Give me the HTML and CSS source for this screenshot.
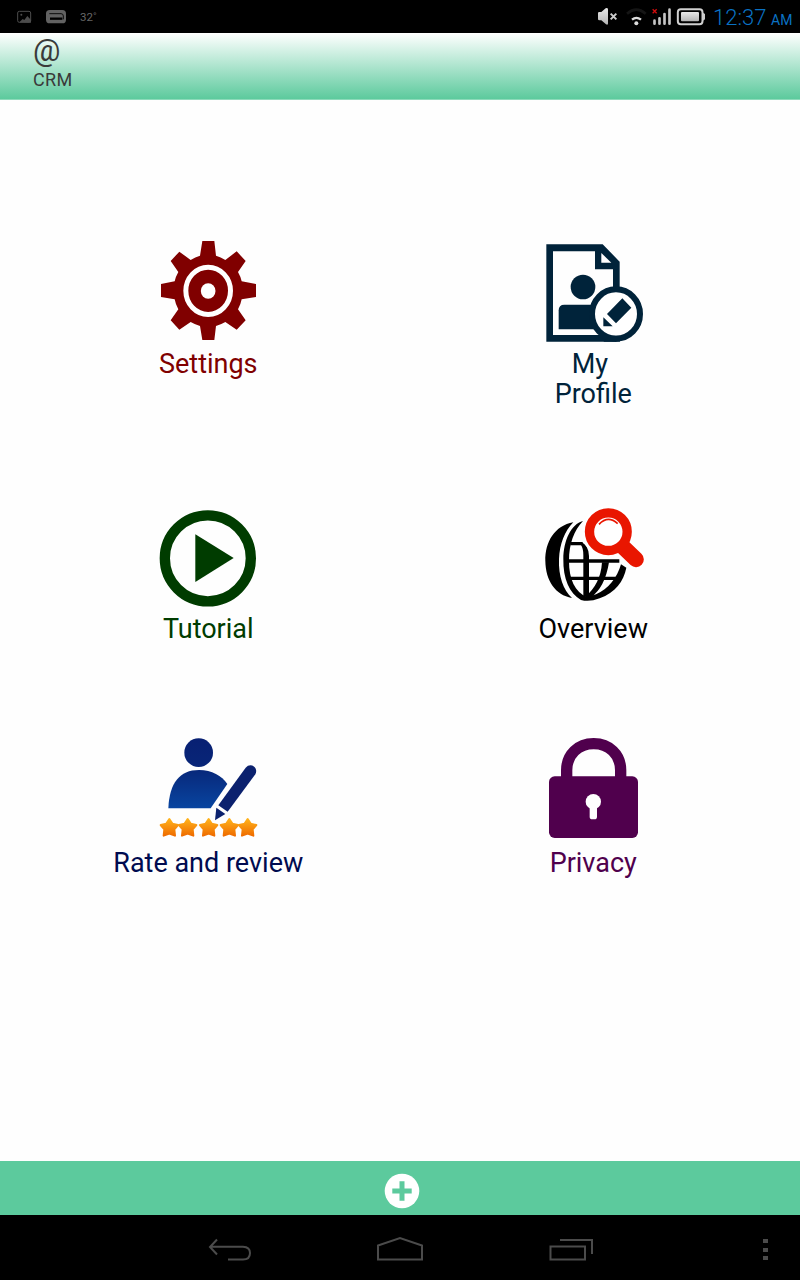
FILE: index.html
```html
<!DOCTYPE html>
<html lang="en">
<head>
<meta charset="utf-8">
<title>CRM</title>
<link rel="stylesheet" href="styles.css">
</head>
<body>
<div class="statusbar">
  <svg class="status-left" viewBox="0 0 76 33">
    <g transform="scale(.33333)">
      <rect x="53" y="34" width="39" height="33" rx="5" fill="none" stroke="#4c4c4c" stroke-width="3"/>
      <path d="M58 67L68 57L73 60L82 48L93 60V68Z" fill="#4c4c4c"/><circle cx="64" cy="44" r="3" fill="#4c4c4c"/>
      <rect x="138" y="30" width="60" height="40" rx="11" fill="#626262"/>
      <path d="M148 41H183Q190 41 190 48V58" fill="none" stroke="#0c0c0c" stroke-width="3"/>
      <path d="M150 56H187" stroke="#000" stroke-width="7"/>
    </g>
  </svg>
  <span class="temp">32˚</span>
  <svg class="status-right" viewBox="590 0 120 33">
    <defs><linearGradient id="silver" x2="0" y2="1"><stop stop-color="#e8e8e8"/><stop offset="1" stop-color="#b4b4b4"/></linearGradient></defs>
    <g transform="translate(580 0) scale(.33333)">
      <path d="M54 39Q54 36 58 36H64L77 25Q83 22 84 28V71Q83 76 78 73L64 61H58Q54 61 54 57Z" fill="url(#silver)"/>
      <path d="M92 41L109 58M109 41L92 58" stroke="#ccc" stroke-width="6"/>
      <path d="M141 41Q169 17 197 41" fill="none" stroke="#151515" stroke-width="8"/>
      <path d="M156 59Q169 48 183 59" fill="none" stroke="#ddd" stroke-width="7"/>
      <circle cx="169" cy="70" r="6" fill="#ddd"/>
      <path d="M218 28L230 40M230 28L218 40" stroke="#d00c0c" stroke-width="4"/>
      <path d="M223.500 62V71M238.500 55V71M253.500 42V71M268.500 29V71" stroke="#c4c4c4" stroke-width="8" stroke-linecap="round"/>
      <rect x="293.500" y="27.500" width="74" height="45" rx="9" fill="none" stroke="#d0d0d0" stroke-width="6"/>
      <rect x="303" y="36" width="54" height="28" rx="3" fill="url(#silver)"/>
      <path d="M369 38L375 42V58L369 62Z" fill="#ccc"/>
    </g>
  </svg>
  <span class="time">12:37</span><span class="ampm">AM</span>
</div>

<header class="appbar">
  <span class="logo">@</span>
  <span class="name">CRM</span>
</header>

<main class="menu">
  <a class="tile settings">
    <svg class="icon" viewBox="152 239 112 110"><g transform="translate(140 230) scale(.33333)">
      <path fill="currentColor" d="M187 33H223L228 77Q242 81 256 90L290 64L317 93L294 126Q302 140 305 154L348 162V201L305 208Q302 224 294 238L317 271L290 299L256 276Q242 284 228 288L223 330H187L180 288Q166 284 152 276L118 299L92 271L115 238Q107 224 104 208L63 201V162L104 154Q107 140 115 126L92 93L118 65L152 90Q166 81 180 77Z"/>
      <ellipse cx="204.500" cy="182.500" rx="67" ry="71" fill="none" stroke="#fff" stroke-width="15"/>
      <ellipse cx="204.500" cy="183" rx="22" ry="23" fill="#fff"/>
    </g></svg>
    <span class="label">Settings</span>
  </a>
  <a class="tile profile">
    <svg class="icon" viewBox="537 239 112 110"><g transform="translate(520 230) scale(.33333)">
      <path d="M79 43H248L299 95V180H279V118H225V64H99V315H289V335H79Z" fill="currentColor"/>
      <path d="M244 69V98H274Z" fill="#fff"/>
      <circle cx="189" cy="171" r="37" fill="currentColor"/>
      <path d="M116 298V241Q116 224 133 224H240V298Z" fill="currentColor"/>
      <ellipse cx="288" cy="252" rx="72" ry="74" fill="#fff" stroke="currentColor" stroke-width="18"/>
      <path d="M270 317H300V335H250Z" fill="currentColor"/>
      <path d="M307 205L334 233L288 280L261 252Z M250 262L278 289H250Z" fill="currentColor"/>
    </g></svg>
    <span class="label">My&nbsp;<br>Profile</span>
  </a>
  <a class="tile tutorial">
    <svg class="icon" viewBox="152 504 112 110"><g transform="translate(140 500) scale(.33333)">
      <circle cx="203.500" cy="175" r="129" fill="none" stroke="currentColor" stroke-width="31"/>
      <path d="M166 103L281 174L166 246Z" fill="currentColor"/>
    </g></svg>
    <span class="label">Tutorial</span>
  </a>
  <a class="tile overview">
    <svg class="icon" viewBox="537 504 112 110"><g transform="translate(520 500) scale(.33333)">
      <path d="M160 67C104 77 75 126 76 183C77 242 106 285 156 294C130 270 115 228 117 177C119 132 134 93 160 67Z" fill="currentColor"/>
      <path d="M189 63C153 73 131 120 130 177C129 235 148 280 183 300Q208 307 239 295C286 277 311 245 319 203L303 193C292 232 265 268 228 283L202 291C164 277 147 237 147 182C147 132 162 91 189 63Z" fill="currentColor"/>
      <path d="M151 131H188M140 183H298M148 235H297" fill="none" stroke="currentColor" stroke-width="10"/>
      <path d="M185 127Q206 137 207 168V290H190V165Q190 145 183 135Z" fill="currentColor"/>
      <path d="M246 187H267Q255 262 213 292L195 291Q242 252 246 187Z" fill="currentColor"/>
      <path d="M315 141L348 177" stroke="#fff" stroke-width="60" stroke-linecap="round"/>
      <circle cx="265" cy="95" r="79" fill="#fff"/>
      <path d="M305 137L348 178" stroke="#e91600" stroke-width="47" stroke-linecap="round"/>
      <circle cx="265" cy="95" r="56.500" fill="#fff" stroke="#e91600" stroke-width="28"/>
      <path d="M237 73Q264 45 293 71" fill="none" stroke="#e91600" stroke-width="5"/>
    </g></svg>
    <span class="label">Overview</span>
  </a>
  <a class="tile rate">
    <svg class="icon" viewBox="152 738 112 110">
      <defs>
        <linearGradient id="blue" gradientUnits="userSpaceOnUse" x1="0" y1="30" x2="0" y2="235"><stop stop-color="#082073"/><stop offset=".4" stop-color="#082678"/><stop offset="1" stop-color="#0845a0"/></linearGradient>
        <linearGradient id="gold" x2="0" y2="1"><stop stop-color="#ffb21b"/><stop offset="1" stop-color="#ef6d00"/></linearGradient>
        <path id="star" d="M0-25L9-11L26-7L15 6L17 25L0 19L-17 25L-15 6L-26-7L-9-11Z" fill="url(#gold)" stroke="url(#gold)" stroke-width="6" stroke-linejoin="round"/>
      </defs>
      <g transform="translate(100 730) scale(.33333)">
        <circle cx="296" cy="68" r="43" fill="url(#blue)"/>
        <path d="M205 235C208 159 239 120 297 120C336 120 365 137 382 162L332 235Z" fill="url(#blue)"/>
        <path d="M355 226L437 113C451 95 477 112 466 133L383 245Z" fill="#0b216e"/>
        <use href="#star" x="208" y="292"/><use href="#star" x="263" y="292"/><use href="#star" x="326" y="292"/><use href="#star" x="388" y="292"/><use href="#star" x="443" y="292"/>
        <path d="M349 233L376 252L345 271Z" fill="#0b216e"/>
      </g>
    </svg>
    <span class="label">Rate and review</span>
  </a>
  <a class="tile privacy">
    <svg class="icon" viewBox="537 738 112 110"><g transform="translate(530 730) scale(.33333)">
      <path d="M110 145V121C110 73 145 41 191 41C237 41 272 73 272 121V145" fill="none" stroke="currentColor" stroke-width="34"/>
      <rect x="57" y="139" width="267" height="185" rx="17" fill="currentColor"/>
      <circle cx="190" cy="215" r="23" fill="#fff"/><rect x="179" y="222" width="22" height="46" rx="8" fill="#fff"/>
    </g></svg>
    <span class="label">Privacy</span>
  </a>
</main>

<footer class="addbar">
  <svg class="add" viewBox="0 0 36 36"><circle cx="18" cy="18" r="17.300" fill="#fff"/><path d="M18 8.300V27.700M8.300 18H27.700" stroke="#5cca9d" stroke-width="5"/></svg>
</footer>
<nav class="navbar">
  <svg viewBox="0 1215 800 65" width="800" height="65" fill="none" stroke="#4b4b4b" stroke-width="2">
    <path d="M217 1239.500L210 1247L217 1254.500M210 1246.700H243Q250 1247 250 1253Q250 1259.500 243 1259.500H228"/>
    <path d="M378 1259.500V1245.500L400 1238L422 1245.500V1259.500Z"/>
    <path d="M550.500 1246.500H585V1259.500H550.500ZM560 1240H592V1254"/>
    <path d="M763 1241H768M763 1250H768M763 1258H768" stroke-width="4"/>
  </svg>
</nav>
</body>
</html>
```
FILE: styles.css
```css
body {
  margin: 0;
  width: 800px;
  height: 1280px;
  display: flex;
  flex-direction: column;
  overflow: hidden;
  background: #fefefe;
  font-family: Roboto, "Liberation Sans", sans-serif;
}
svg { display: block; flex: none; }
.statusbar {
  height: 33px;
  flex: none;
  display: flex;
  align-items: center;
  background: #000;
}
.status-left { width: 76px; height: 33px; }
.temp { margin-left: 4px; width: 40px; font-size: 11.5px; color: #666; }
.status-right { width: 120px; height: 33px; margin-left: auto; }
.time, .ampm { color: #0a72c4; white-space: nowrap; }
.time { margin-left: 3px; width: 54px; font-size: 22px; font-weight: 300; line-height: 33px; padding-top: 2px; }
.ampm { margin-left: 4px; width: 29px; font-size: 14px; padding-top: 7px; }
.appbar {
  height: 66px;
  flex: none;
  display: flex;
  flex-direction: column;
  padding-left: 33px;
  color: #3a3a3a;
  background: linear-gradient(#fff, #5cca9d);
  border-bottom: 1px solid #8ddaba;
}
.logo { font-size: 30.5px; line-height: 36px; height: 36px; }
.name { font-size: 18px; line-height: 22px; letter-spacing: 0.4px; }
.menu {
  flex: 1;
  display: grid;
  grid-template-columns: 385px 385px;
  grid-template-rows: 265px 234px 200px;
  padding: 139px 14px 0 15px;
}
.tile { display: flex; flex-direction: column; align-items: center; }
.icon { width: 112px; height: 110px; }
.label {
  padding-left: 1.5px;
  font-size: 27px;
  line-height: 30px;
  text-align: center;
  white-space: nowrap;
}
.settings { color: #800000; }
.profile { color: #00233a; }
.tutorial { color: #003c00; }
.overview { color: #000; }
.rate { color: #000b50; }
.privacy { color: #50004d; }
.addbar {
  height: 54px;
  flex: none;
  display: flex;
  align-items: center;
  justify-content: center;
  padding: 5px 0 0 4px;
  box-sizing: border-box;
  background: #5cca9d;
}
.add { width: 36px; height: 36px; }
.navbar { height: 65px; flex: none; background: #000; }
```
